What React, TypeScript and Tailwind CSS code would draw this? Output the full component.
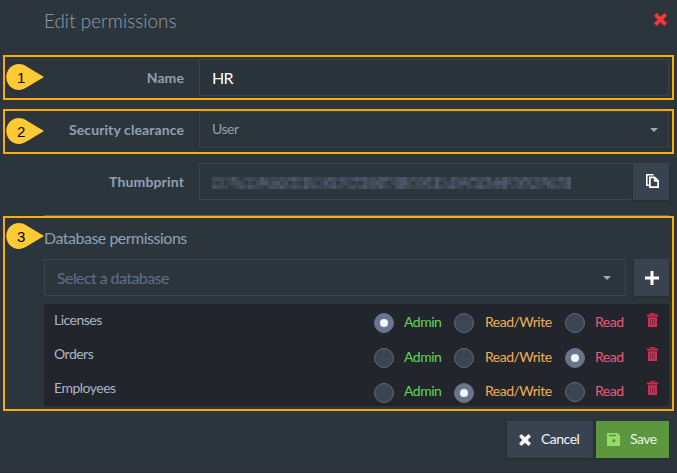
import React from "react";

const ORANGE_BOX = "ml-[3px] w-[671px] border-2 border-[#fbab06]";

function Pin({ n, className }: { n: number; className: string }) {
  return (
    <div className={`absolute left-px z-10 h-[26px] w-[38px] ${className}`}>
      <svg className="absolute inset-0" width="38" height="26" viewBox="0 0 38 26">
        <path
          d="M38 13 L20.5 2.4 C17.8 .7 15.6 0 13 0 C5.8 0 .3 5.8 .3 13 C.3 20.2 5.8 26 13 26 C15.6 26 17.8 25.3 20.5 23.6 Z"
          fill="#ffca34"
        />
      </svg>
      <span className="absolute left-[11px] top-[5px] font-['Liberation_Sans',sans-serif] text-[15px] leading-[18px] text-black">
        {n}
      </span>
    </div>
  );
}

function Cross({ size, color, className = "" }: { size: number; color: string; className?: string }) {
  return (
    <svg width={size} height={size} viewBox="0 0 13 13" className={className}>
      <path
        d="M2.7 .3L6.5 3.9L10.3 .3L12.7 2.7L9.1 6.5L12.7 10.3L10.3 12.7L6.5 9.1L2.7 12.7L.3 10.3L3.9 6.5L.3 2.7Z"
        fill={color}
        stroke={color}
        strokeWidth=".5"
        strokeLinejoin="round"
      />
    </svg>
  );
}

function Caret() {
  return (
    <svg width="8" height="4" viewBox="0 0 8 4">
      <path d="M0 0H8L4 4Z" fill="#9bacbd" />
    </svg>
  );
}

function Trash() {
  return (
    <svg width="12" height="14" viewBox="0 0 12 14">
      <path d="M3.5 1.8V.5H7.5V1.8" fill="none" stroke="#d32c52" />
      <path d="M0 1.5H11V3.4H0Z M1 4.2H10V14H1Z" fill="#d32c52" />
      <path d="M3.5 6V12 M5.5 6V12 M7.5 6V12" stroke="#7e2841" strokeWidth=".9" />
    </svg>
  );
}

function Copy() {
  return (
    <svg width="13" height="14" viewBox="0 0 13 14" fill="none" stroke="#fff">
      <path d="M7.5 .8H.8V11.3H3" strokeWidth="1.6" />
      <path d="M3.9 3.3H8.6L12.1 6.8V13.1H3.9Z" strokeWidth="1.8" />
      <path d="M8.3 3.5V7.2H12Z" fill="#fff" />
    </svg>
  );
}

function Save() {
  return (
    <svg width="13" height="13" viewBox="0 0 13 13">
      <path fillRule="evenodd" d="M0 0H10.5L13 2.5V13H0Z M2 1.7V3.2H9V1.7Z M6.8 6.1A1.7 1.7 0 1 0 6.8 9.5A1.7 1.7 0 0 0 6.8 6.1Z" fill="#98dc68" />
    </svg>
  );
}

const SHADES: Record<string, string> = {
  a: "#313a43",
  b: "#38434e",
  c: "#3c4652",
  d: "#414d5d",
  e: "#485569",
  f: "#424854",
};

const MOSAIC = [
  "cdfbcebacfcbefbcbdcdedcedbcbfedcefbdedecdbeedcdeecdcdcebefbaefcdbefcdeadbefcdbefcdcebfcefe",
  "bacabfdcabafeebdebdacbadfcabebdacfbabadfdedbacfeefacbecaeacbdceefabdadfeeedabebdacbdecabfe",
  "dfcbaacdbefcbaddfecbdfbecdcbcfebcacdbdecdcecbadedcbccbdcecbdecbafbdeffbdceacbdbcecbafdcbfe",
];

function RedactedThumbprint() {
  return (
    <div className="w-[358px]">
      {MOSAIC.map((row, r) => (
        <div key={r} className="flex h-1">
          {row.split("").map((c, i) => (
            <span key={i} className="h-1 flex-1" style={{ backgroundColor: SHADES[c] }} />
          ))}
        </div>
      ))}
    </div>
  );
}

function Radio({ on }: { on: boolean }) {
  return (
    <span
      className={`flex size-5 shrink-0 items-center justify-center rounded-full border ${
        on ? "border-[#68758c] bg-[#68758c]" : "border-[#5b6b7f] bg-[#3b4652]"
      }`}
    >
      {on && <span className="size-2 rounded-full bg-[#f2f5fa]" />}
    </span>
  );
}

const ROWS = [
  { name: "Licenses", level: 0, offset: "mt-[9px]", text: "pb-[4px]", lastRadio: "" },
  { name: "Orders", level: 2, offset: "mt-[10px]", text: "pb-[4px]", lastRadio: "" },
  { name: "Employees", level: 1, offset: "mt-[11px]", text: "pb-[6px]", lastRadio: "pb-[2px]" },
];

function PermissionRow({ name, level, offset, text, lastRadio }: (typeof ROWS)[number]) {
  return (
    <div className="flex h-[34px] text-[14px] leading-[17px]">
      <span className="w-[330px] pl-[10px] pt-[7px] tracking-[-0.5px] text-[#a9b7c6]">{name}</span>
      <div className={`flex h-5 items-center tracking-[-0.5px] ${offset}`}>
        <Radio on={level === 0} />
        <span className={`w-[60px] pl-[10px] text-[#5fd84c] ${text}`}>Admin</span>
        <Radio on={level === 1} />
        <span className={`w-[91px] whitespace-nowrap pl-[11px] text-[#f2ae55] ${text}`}>Read/Write</span>
        <span className={lastRadio}><Radio on={level === 2} /></span>
        <span className={`w-[61px] pl-[10px] text-[#f05a78] ${text}`}>Read</span>
      </div>
      <span className="pl-px pt-[9px]"><Trash /></span>
    </div>
  );
}

export default function App() {
  return (
    <div className="h-[473px] w-[677px] overflow-hidden border-b border-[#282f36] bg-[#2d353c] font-[Lato,sans-serif] text-[#8fa0b2]">
      <header className="flex h-[55px] justify-between pl-[44px] pr-[10px]">
        <h1 className="pt-[10px] text-[18.7px] font-light leading-[23px] tracking-[0.1px]">Edit permissions</h1>
        <Cross size={13} color="#ff3534" className="mt-[13px]" />
      </header>

      <section className={`relative flex h-[45px] pt-[2px] ${ORANGE_BOX}`}>
        <Pin n={1} className="top-[7px]" />
        <label className="w-[194px] pr-[15px] pt-[10px] text-right text-[14px] font-bold leading-[18px] tracking-[0.1px]">Name</label>
        <div className="flex h-[37px] w-[470px] items-center border border-[#38434e] bg-[#2b333b] pl-3 text-[16px] tracking-[-0.6px] text-white">HR</div>
      </section>

      <section className={`relative mt-[9px] flex h-[45px] ${ORANGE_BOX}`}>
        <Pin n={2} className="top-[7px]" />
        <label className="w-[194px] pr-[15px] pt-[10px] text-right text-[14px] font-bold leading-[18px] tracking-[0.1px]">Security clearance</label>
        <div className="flex h-[37px] w-[470px] items-center justify-between border border-[#38434e] pl-3 pr-[10px] text-[14px] shadow-[0_1px_2px_#252c33]">
          <span className="pb-0.5 tracking-[-0.5px]">User</span>
          <Caret />
        </div>
      </section>

      <section className="flex h-[61px] pl-[5px] pt-[9px]">
        <label className="w-[194px] pr-[15px] pt-[10px] text-right text-[14px] font-bold leading-[18px] tracking-[0.15px]">Thumbprint</label>
        <div className="flex h-[37px] w-[434px] items-center border border-r-0 border-[#38434e] pl-3 pt-0.5">
          <RedactedThumbprint />
        </div>
        <button className="flex h-[37px] w-9 items-center justify-center bg-[#39434f] pl-0.5 pb-0.5 shadow-[0_1px_2px_#242a31]"><Copy /></button>
      </section>
      <hr className="ml-[44px] w-[625px] border-[#566473]" />

      <section className={`relative h-[195px] pl-[39px] ${ORANGE_BOX}`}>
        <Pin n={3} className="top-[5px]" />
        <h2 className="pt-[10px] text-[16px] leading-5 tracking-[-0.5px]">Database permissions</h2>
        <div className="mt-[11px] flex gap-2">
          <div className="flex h-[37px] w-[582px] items-center justify-between border border-[#38434e] pl-3 pr-[14px] text-[16px] text-[#5f6f8b]">
            <span className="tracking-[-0.58px]">Select a database</span>
            <Caret />
          </div>
          <button className="flex h-[37px] w-[35px] items-center justify-center bg-[#39434f] shadow-[0_1px_2px_#242a31]">
            <svg width="14" height="14" viewBox="0 0 14 14"><path d="M7 0V14M0 7H14" stroke="#fff" strokeWidth="3" /></svg>
          </button>
        </div>
        <div className="mt-2 h-[102px] w-[625px] bg-[#22252c]">
          {ROWS.map((r) => <PermissionRow key={r.name} {...r} />)}
        </div>
      </section>

      <footer className="mt-[10px] flex justify-end gap-[3px] pr-2 text-[14px] tracking-[-0.5px]">
        <button className="flex h-[37px] w-[86px] items-center bg-[#39434f] pl-3 text-[#f3f6f9] shadow-[0_1px_2px_#242a31]">
          <Cross size={12} color="#fff" />
          <span className="pb-0.5 pl-[10px]">Cancel</span>
        </button>
        <button className="flex h-[37px] w-[73px] items-center bg-[#5c963e] pl-[11px] text-[#e9f5e2] shadow-[0_1px_2px_#242a31]">
          <Save />
          <span className="pb-0.5 pl-[10px]">Save</span>
        </button>
      </footer>
    </div>
  );
}
